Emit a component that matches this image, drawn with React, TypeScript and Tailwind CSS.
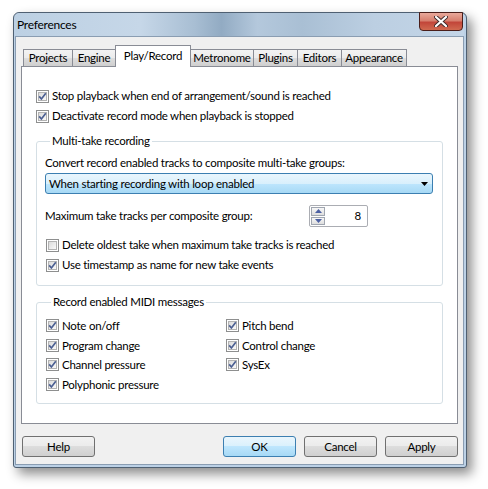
import type { ReactNode } from "react";

const FONT = "font-['Lato','Liberation_Sans',sans-serif]";

function Check({ checked }: { checked: boolean }) {
  return (
    <svg width="13" height="13" viewBox="0 0 13 13" className="shrink-0">
      <defs>
        <linearGradient id="cbg" x1="0" y1="0" x2="1" y2="1">
          <stop offset="0" stopColor="#d9d9d9" />
          <stop offset="1" stopColor="#fbfbfb" />
        </linearGradient>
      </defs>
      <rect x="0.5" y="0.5" width="12" height="12" fill="#fff" stroke="#8e8f8f" />
      <rect x="2.5" y="2.5" width="8" height="8" fill="url(#cbg)" stroke="#b3b3b3" />
      {checked && (
        <path d="M3.2 6.4 L5.4 9 L9.8 3.2" fill="none" stroke="#4b5f92" strokeWidth="1.7" />
      )}
    </svg>
  );
}

function CheckRow({ checked, children }: { checked: boolean; children: ReactNode }) {
  return (
    <div className="flex items-center gap-[3px] h-[20px]">
      <Check checked={checked} />
      <span>{children}</span>
    </div>
  );
}

function Group({ title, className, children }: { title: string; className?: string; children: ReactNode }) {
  return (
    <fieldset className={`border border-[#d5dfe5] rounded-[3px] w-[407px] ${className ?? ""}`}>
      <legend className="ml-[5px] px-[2px] h-[16px] leading-[16px]">{title}</legend>
      {children}
    </fieldset>
  );
}

function Button({ label, primary }: { label: string; primary?: boolean }) {
  return (
    <button
      className={
        "w-[73px] h-[21px] rounded-[3px] border text-center leading-[19px] " +
        (primary
          ? "border-[#3c7fb1] bg-[linear-gradient(180deg,#eaf6fd_0%,#d9f0fc_50%,#bee6fd_50%,#a7d9f5_100%)]"
          : "border-[#707070] bg-[linear-gradient(180deg,#f2f2f2_0%,#ebebeb_50%,#dddddd_50%,#cfcfcf_100%)]")
      }
    >
      {label}
    </button>
  );
}

const tabs = [
  { label: "Projects", w: "w-[50px]" },
  { label: "Engine", w: "w-[44px]" },
  { label: "Play/Record", w: "w-[76px]", selected: true },
  { label: "Metronome", w: "w-[64px]" },
  { label: "Plugins", w: "w-[45px]" },
  { label: "Editors", w: "w-[45px]" },
  { label: "Appearance", w: "w-[66px]" },
];

export default function App() {
  return (
    <div className={`w-[488px] h-[489px] bg-white pt-[12px] pl-[13px] text-[11.5px] tracking-[-0.25px] text-black ${FONT}`}>
      {/* window */}
      <div className="w-[454px] h-[456px] border border-[#4f6072] rounded-t-[6px] rounded-b-[3px] bg-[#bcd1e6] shadow-[5px_6px_12px_rgba(0,0,0,0.45)] flex flex-col pl-[1px] pr-[2px] pb-[2px]">
        {/* title bar */}
        <div className="h-[23px] shrink-0 flex items-start justify-between rounded-t-[5px] bg-[linear-gradient(90deg,#bcd0e3_0%,#c6d7e8_28%,#a8bed3_40%,#92abc3_46%,#b4c8dc_54%,#a9bfd4_64%,#bccfe2_80%,#c3d5e7_100%)]">
          <span className="pl-[2px] pt-[4px] leading-[16px] text-[12px]">Preferences</span>
          <div className="w-[44px] h-[19px] mr-[1px] -mt-[1px] rounded-b-[4px] border border-[#4a1e1a] bg-[linear-gradient(180deg,#e9a99b_0%,#d7806f_45%,#c2463a_55%,#d06a50_100%)] flex items-center justify-center">
            <svg width="14" height="11" viewBox="0 0 14 11">
              <path d="M2 1 L12 10 M12 1 L2 10" stroke="#3d2a2a" strokeWidth="4" strokeLinecap="round" />
              <path d="M2 1 L12 10 M12 1 L2 10" stroke="#ffffff" strokeWidth="2.2" strokeLinecap="round" />
            </svg>
          </div>
        </div>

        {/* client area */}
        <div className="flex-1 border border-[#8a9db2] bg-[#f0f0f0] flex flex-col pt-[8px] pl-[5px]">
          {/* tabs */}
          <div className="flex items-end h-[21px] pl-[2px]">
            {tabs.map((t) =>
              t.selected ? (
                <div
                  key={t.label}
                  className={`${t.w} h-[22px] -mb-[1px] -ml-[1px] relative z-10 border border-b-0 border-[#898c95] bg-white flex items-start justify-center pt-[2px] leading-[16px]`}
                >
                  {t.label}
                </div>
              ) : (
                <div
                  key={t.label}
                  className={`${t.w} h-[17px] border border-b-0 border-[#898c95] bg-[linear-gradient(180deg,#f3f3f3_0%,#ebebeb_50%,#dddddd_51%,#cfcfcf_100%)] flex items-center justify-center leading-[16px] -ml-[1px] first:ml-0`}
                >
                  {t.label}
                </div>
              )
            )}
          </div>

          {/* panel */}
          <div className="w-[437px] h-[358px] border border-[#898c95] bg-white pt-[19px] pl-[14px]">
            <CheckRow checked>Stop playback when end of arrangement/sound is reached</CheckRow>
            <CheckRow checked>Deactivate record mode when playback is stopped</CheckRow>

            <Group title="Multi-take recording" className="mt-[7px] pl-[8px] pb-[10px]">
              <div className="mt-[6px] leading-[16px]">Convert record enabled tracks to composite multi-take groups:</div>
              <div className="mt-[2px] w-[388px] h-[21px] rounded-[3px] border border-[#3c7fb1] bg-[linear-gradient(180deg,#eaf6fd_0%,#d9f0fc_50%,#bee6fd_50%,#a7d9f5_100%)] flex items-center justify-between pl-[3px] pr-[4px]">
                <span className="leading-[16px]">When starting recording with loop enabled</span>
                <svg width="7" height="4" viewBox="0 0 7 4">
                  <path d="M0 0 H7 L3.5 4 Z" fill="#000" />
                </svg>
              </div>
              <div className="mt-[11px] flex items-center h-[22px]">
                <span className="w-[264px] leading-[16px]">Maximum take tracks per composite group:</span>
                <div className="w-[59px] h-[22px] border border-[#abadb3] rounded-[2px] bg-white flex items-stretch">
                  <div className="w-[16px] flex flex-col gap-[1px] p-[1px]">
                    <div className="flex-1 border border-[#a0a6b0] bg-[linear-gradient(180deg,#f7f7f7,#dedede)] flex items-center justify-center">
                      <svg width="7" height="4" viewBox="0 0 7 4"><path d="M0 4 H7 L3.5 0 Z" fill="#4c61a3" /></svg>
                    </div>
                    <div className="flex-1 border border-[#a0a6b0] bg-[linear-gradient(180deg,#f7f7f7,#dedede)] flex items-center justify-center">
                      <svg width="7" height="4" viewBox="0 0 7 4"><path d="M0 0 H7 L3.5 4 Z" fill="#4c61a3" /></svg>
                    </div>
                  </div>
                  <span className="flex-1 text-right pr-[6px] leading-[20px]">8</span>
                </div>
              </div>
              <div className="mt-[8px] ml-[1px]">
                <CheckRow checked={false}>Delete oldest take when maximum take tracks is reached</CheckRow>
                <CheckRow checked>Use timestamp as name for new take events</CheckRow>
              </div>
            </Group>

            <Group title="Record enabled MIDI messages" className="mt-[8px] pl-[9px] pb-[9px]">
              <div className="mt-[6px] grid grid-cols-[180px_1fr] auto-rows-[19.5px]">
                <div className="flex items-center gap-[3px]"><Check checked /><span>Note on/off</span></div>
                <div className="flex items-center gap-[3px]"><Check checked /><span>Pitch bend</span></div>
                <div className="flex items-center gap-[3px]"><Check checked /><span>Program change</span></div>
                <div className="flex items-center gap-[3px]"><Check checked /><span>Control change</span></div>
                <div className="flex items-center gap-[3px]"><Check checked /><span>Channel pressure</span></div>
                <div className="flex items-center gap-[3px]"><Check checked /><span>SysEx</span></div>
                <div className="flex items-center gap-[3px]"><Check checked /><span>Polyphonic pressure</span></div>
              </div>
            </Group>
          </div>

          {/* buttons */}
          <div className="mt-[12px] flex pl-[1px] w-[437px]">
            <Button label="Help" />
            <div className="flex-1" />
            <div className="flex gap-[8px] ml-[1px]">
              <Button label="OK" primary />
              <Button label="Cancel" />
              <Button label="Apply" />
            </div>
          </div>
        </div>
      </div>
    </div>
  );
}
